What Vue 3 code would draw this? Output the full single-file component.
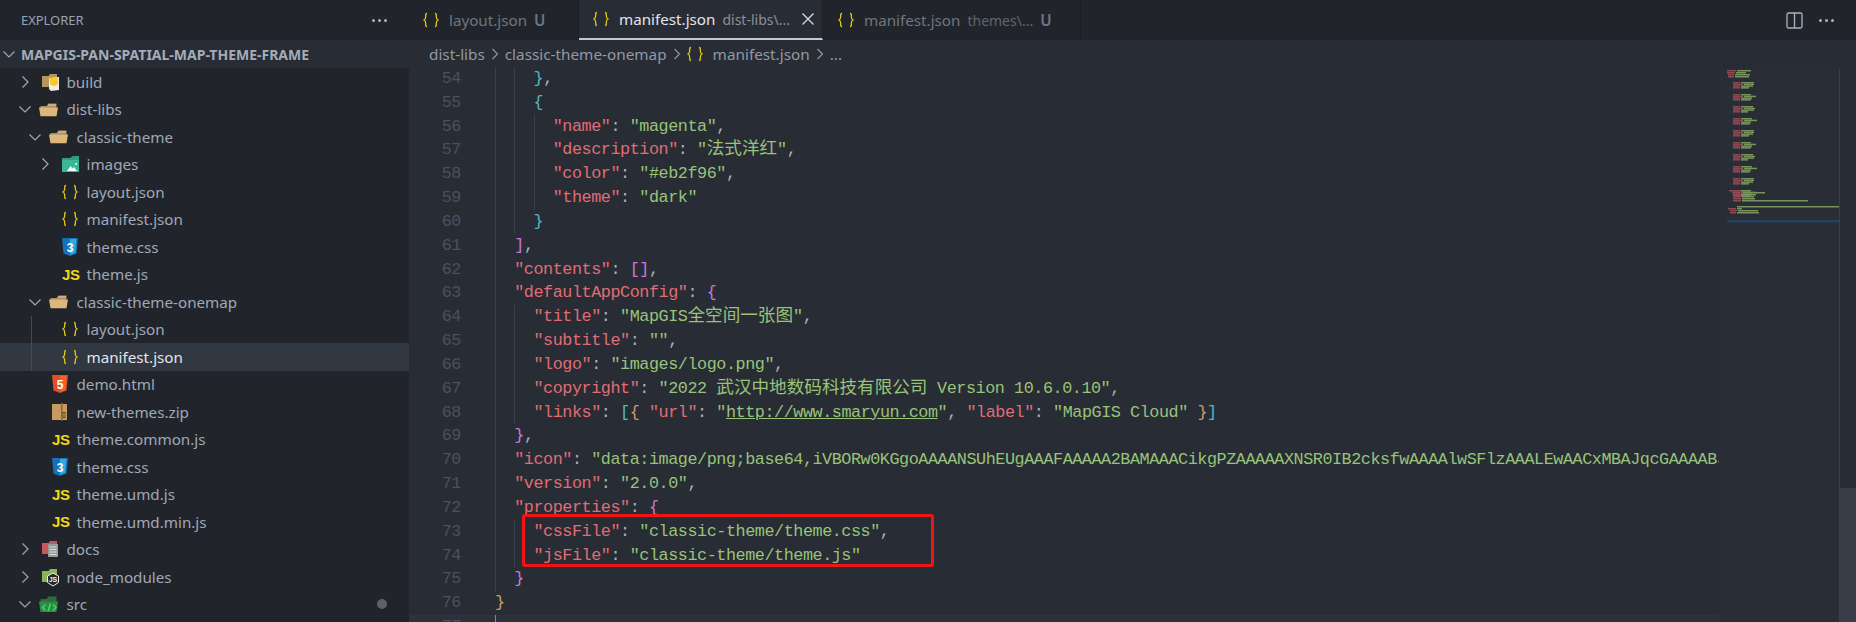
<script setup>
const tree = [
  { name: 'build', d: 0, chev: 'r', icon: 'build' },
  { name: 'dist-libs', d: 0, chev: 'd', icon: 'open' },
  { name: 'classic-theme', d: 1, chev: 'd', icon: 'open' },
  { name: 'images', d: 2, chev: 'r', icon: 'images' },
  { name: 'layout.json', d: 2, icon: 'json' },
  { name: 'manifest.json', d: 2, icon: 'json' },
  { name: 'theme.css', d: 2, icon: 'css' },
  { name: 'theme.js', d: 2, icon: 'js' },
  { name: 'classic-theme-onemap', d: 1, chev: 'd', icon: 'open' },
  { name: 'layout.json', d: 2, icon: 'json', guide: true },
  { name: 'manifest.json', d: 2, icon: 'json', guide: true, sel: true },
  { name: 'demo.html', d: 1, icon: 'html' },
  { name: 'new-themes.zip', d: 1, icon: 'zip' },
  { name: 'theme.common.js', d: 1, icon: 'js' },
  { name: 'theme.css', d: 1, icon: 'css' },
  { name: 'theme.umd.js', d: 1, icon: 'js' },
  { name: 'theme.umd.min.js', d: 1, icon: 'js' },
  { name: 'docs', d: 0, chev: 'r', icon: 'docs' },
  { name: 'node_modules', d: 0, chev: 'r', icon: 'node' },
  { name: 'src', d: 0, chev: 'd', icon: 'src', dot: true }
]

const k = t => ['k', t]
const s = t => ['s', t]
const p = t => ['p', t]
const b = t => ['b', t]
const o = t => ['o', t]
const m = t => ['m', t]
const u = t => ['u', t]

const longIcon = '"data:image/png;base64,iVBORw0KGgoAAAANSUhEUgAAAFAAAAA2BAMAAACikgPZAAAAAXNSR0IB2cksfwAAAAlwSFlzAAALEwAACxMBAJqcGAAAABJRU5ErkJggg'

const code = [
  [54, 2, [b('}'), p(',')]],
  [55, 2, [b('{')]],
  [56, 3, [k('"name"'), p(': '), s('"magenta"'), p(',')]],
  [57, 3, [k('"description"'), p(': '), s('"'), ['cjk', '法式洋红'], s('"'), p(',')]],
  [58, 3, [k('"color"'), p(': '), s('"#eb2f96"'), p(',')]],
  [59, 3, [k('"theme"'), p(': '), s('"dark"')]],
  [60, 2, [b('}')]],
  [61, 1, [m(']'), p(',')]],
  [62, 1, [k('"contents"'), p(': '), m('[]'), p(',')]],
  [63, 1, [k('"defaultAppConfig"'), p(': '), m('{')]],
  [64, 2, [k('"title"'), p(': '), s('"MapGIS'), ['cjk', '全空间一张图'], s('"'), p(',')]],
  [65, 2, [k('"subtitle"'), p(': '), s('""'), p(',')]],
  [66, 2, [k('"logo"'), p(': '), s('"images/logo.png"'), p(',')]],
  [67, 2, [k('"copyright"'), p(': '), s('"2022 '), ['cjk', '武汉中地数码科技有限公司'], s(' Version 10.6.0.10"'), p(',')]],
  [68, 2, [k('"links"'), p(': '), b('['), o('{ '), k('"url"'), p(': '), s('"'), u('http://www.smaryun.com'), s('"'), p(', '), k('"label"'), p(': '), s('"MapGIS Cloud"'), p(' '), o('}'), b(']')]],
  [69, 1, [m('}'), p(',')]],
  [70, 1, [k('"icon"'), p(': '), s(longIcon)]],
  [71, 1, [k('"version"'), p(': '), s('"2.0.0"'), p(',')]],
  [72, 1, [k('"properties"'), p(': '), m('{')]],
  [73, 2, [k('"cssFile"'), p(': '), s('"classic-theme/theme.css"'), p(',')]],
  [74, 2, [k('"jsFile"'), p(': '), s('"classic-theme/theme.js"')]],
  [75, 1, [m('}')]],
  [76, 0, [o('}')]],
  [77, 0, []]
]

// Minimap: each source line is a 2px strip of dull key/value colour.
const mini = []
const strip = (y, x, kw, vw) => {
  mini.push({ x, y, w: kw, c: '#8c4a53' })
  mini.push({ x: x + kw + 1, y, w: vw, c: '#76945c' })
}
const widths = [17, 13, 15, 14]
;[[70, 8, 9, 14], [72, 8, 8, 10], [74, 9, 6, 15], [76, 9, 6, 14]].forEach(r => strip(r[0], r[1], r[2], r[3]))
for (let g = 0; g < 10; g++) {
  const y = 82 + g * 12
  for (let i = 0; i < 4; i++) {
    strip(y + i * 1.7, 14, i === 1 ? 10 : 7, (widths[(g + i) % 4] * (i === 3 ? 0.6 : 0.8)) | 0)
  }
}
;[[190, 10, 12, 8], [192, 13, 10, 22], [194, 14, 8, 14], [196, 14, 8, 12], [198, 14, 8, 13], [200, 14, 8, 66]].forEach(r => strip(r[0], r[1], r[2], r[3]))
;[[208, 9, 8, 5], [210, 11, 7, 20], [212, 11, 6, 22]].forEach(r => strip(r[0], r[1], r[2], r[3]))
const miniRects = mini.map(r => ({ ...r, y: r.y - 68 }))
</script>

<template>
  <div class="window">
    <aside class="sidebar">
      <div class="side-head">
        <span class="side-title">EXPLORER</span>
        <span class="dots"><i></i><i></i><i></i></span>
      </div>
      <div class="section">
        <svg class="chev-sec" width="14" height="14" viewBox="0 0 14 14"><path d="M1.5 4.5 7 10l5.500-5.500" /></svg>
        <span>MAPGIS-PAN-SPATIAL-MAP-THEME-FRAME</span>
      </div>
      <div class="tree">
        <div
          v-for="(r, i) in tree"
          :key="i"
          class="row"
          :class="{ sel: r.sel }"
          :style="{ paddingLeft: 20 + r.d * 10 + 'px' }"
        >
          <span v-if="r.guide" class="tree-guide"></span>
          <span class="chev">
            <svg v-if="r.chev === 'r'" width="14" height="14" viewBox="0 0 14 14"><path d="M4.500 1.500 10 7l-5.500 5.500" /></svg>
            <svg v-else-if="r.chev === 'd'" width="14" height="14" viewBox="0 0 14 14"><path d="M1.500 4.500 7 10l5.500-5.500" /></svg>
          </span>
          <span class="ico">
            <svg v-if="r.icon === 'json'" class="file-ic" width="16" height="16" viewBox="0 0 16 16" fill="none" stroke="#e5c90f" stroke-width="1.300">
              <path d="M4 1.500C2.500 1.500 2.700 3 2.700 4.500S2.700 7.300 1 8c1.700.7 1.700 2 1.700 3.500s-.2 3 1.300 3" />
              <path d="M12 1.500c1.500 0 1.300 1.500 1.300 3s0 2.800 1.700 3.500c-1.700.7-1.700 2-1.700 3.500s.2 3-1.300 3" />
            </svg>
            <span v-else-if="r.icon === 'js'" class="js-ic">JS</span>
            <svg v-else-if="r.icon === 'css'" class="file-ic" width="16" height="18" viewBox="0 0 16 18">
              <path fill="#1572b6" d="M0 0h16l-1.500 15.500L8 18l-6.500-2.500z" />
              <path fill="#33a9dc" d="M8 1v15.800l5.200-1.800L14.400 1z" />
              <text x="8" y="13.500" text-anchor="middle" class="glyph">3</text>
            </svg>
            <svg v-else-if="r.icon === 'html'" class="file-ic" width="16" height="18" viewBox="0 0 16 18">
              <path fill="#e44d26" d="M0 0h16l-1.500 15.500L8 18l-6.500-2.500z" />
              <path fill="#f16529" d="M8 1v15.800l5.200-1.800L14.400 1z" />
              <text x="8" y="13.500" text-anchor="middle" class="glyph">5</text>
            </svg>
            <svg v-else-if="r.icon === 'zip'" class="file-ic" width="16" height="18" viewBox="0 0 16 18">
              <path fill="#c79a5f" d="M0 1h15v16H0z" />
              <path fill="#8a6a3c" d="M9 0h1.500v18H9z" />
              <path fill="#5a4426" d="M10.500 9h3v6h-3z" />
              <path fill="#d8b47f" d="M11.500 10h1v4h-1z" />
            </svg>
            <svg v-else-if="r.icon === 'open'" class="fold-ic" width="20" height="15" viewBox="0 0 20 15">
              <path fill="#a98e62" d="M1.500 4h6l2-2.500h8v5h-16z" />
              <path fill="#e8cfa0" d="M9.500 2.500h7.500v1H9z" />
              <path fill="#dcb67a" d="M0 5.500h19l-1.500 8.800H1.500z" />
            </svg>
            <svg v-else-if="r.icon === 'build'" class="fold-ic2" width="19" height="18" viewBox="0 0 19 18">
              <path fill="#b4975a" d="M1 3h6.500l1.500-2h7v13H1z" />
              <path fill="#f0ece0" d="M8 5l10-1v13l-8 1-2-2z" />
              <path fill="#f9c72e" d="M8.500 5H17v3.500a4 4 0 0 1-8 .5z" />
            </svg>
            <svg v-else-if="r.icon === 'images'" class="file-ic" width="18" height="18" viewBox="0 0 18 18">
              <path fill="#2f9e80" d="M0 3h8l3-2h6v6H0z" />
              <path fill="#3bb893" d="M0 5h17v12H0z" />
              <path fill="#eafff6" d="M5 16l3.500-5 2 2.500 1.500-1.500 3 4z" />
              <circle cx="14" cy="9" r="1" fill="#eafff6" />
            </svg>
            <svg v-else-if="r.icon === 'docs'" class="fold-ic2" width="19" height="18" viewBox="0 0 19 18">
              <path fill="#c6575c" d="M1 3h6.500l1.500-2h7v13H1z" />
              <path fill="#9a9a9a" d="M7 4h10v13H7z" />
              <path fill="#dcdcdc" d="M8.500 6.500h7v1h-7zm0 2.500h7v1h-7zm0 2.500h7v1h-7zm0 2.500h7v1h-7z" />
            </svg>
            <svg v-else-if="r.icon === 'node'" class="fold-ic2" width="19" height="20" viewBox="0 0 19 20">
              <path fill="#8ab45a" d="M1 4h6.500L9 2h7v13H1z" />
              <path fill="#23272e" stroke="#eef2e6" stroke-width="1" d="M12 6l5.500 3v6.500L12 19l-5.500-3.500V9z" />
              <text x="12" y="15" text-anchor="middle" class="glyph-s">JS</text>
            </svg>
            <svg v-else-if="r.icon === 'src'" class="fold-ic" width="20" height="17" viewBox="0 0 20 17">
              <path fill="#2c6e3a" d="M1.500 3h6l2-2.500h8v8h-16z" />
              <path fill="#2f8a45" d="M0 5.500h19l-1.500 10.500H1.500z" />
              <path fill="none" stroke="#3ee25f" stroke-width="1.400" d="M6.500 8.500 3.500 11.500l3 3M14 8.500l3 3-3 3M11.500 7.500 9 15.500" />
            </svg>
          </span>
          <span class="fname">{{ r.name }}</span>
          <span v-if="r.dot" class="dot"></span>
        </div>
      </div>
    </aside>

    <main class="main">
      <div class="tabs">
        <div class="tab tab1">
          <svg class="brace" width="16" height="16" viewBox="0 0 16 16" fill="none" stroke="#e5c90f" stroke-width="1.300">
            <path d="M4 1.500C2.500 1.500 2.700 3 2.700 4.500S2.700 7.300 1 8c1.700.7 1.700 2 1.700 3.500s-.2 3 1.300 3" />
            <path d="M12 1.500c1.500 0 1.300 1.500 1.300 3s0 2.800 1.700 3.500c-1.700.7-1.700 2-1.700 3.500s.2 3-1.300 3" />
          </svg>
          <span class="tname">layout.json</span>
          <span class="tu">U</span>
        </div>
        <div class="tab tab2">
          <svg class="brace" width="16" height="16" viewBox="0 0 16 16" fill="none" stroke="#e5c90f" stroke-width="1.300">
            <path d="M4 1.500C2.500 1.500 2.700 3 2.700 4.500S2.700 7.300 1 8c1.700.7 1.700 2 1.700 3.500s-.2 3 1.300 3" />
            <path d="M12 1.500c1.500 0 1.300 1.500 1.300 3s0 2.800 1.700 3.500c-1.700.7-1.700 2-1.700 3.500s.2 3-1.300 3" />
          </svg>
          <span class="tname">manifest.json</span>
          <span class="tdesc">dist-libs\...</span>
          <svg class="close" width="14" height="14" viewBox="0 0 14 14"><path d="M1.500 1.500l11 11M12.500 1.500l-11 11" /></svg>
        </div>
        <div class="tab tab3">
          <svg class="brace" width="16" height="16" viewBox="0 0 16 16" fill="none" stroke="#e5c90f" stroke-width="1.300">
            <path d="M4 1.500C2.500 1.500 2.700 3 2.700 4.500S2.700 7.300 1 8c1.700.7 1.700 2 1.700 3.500s-.2 3 1.300 3" />
            <path d="M12 1.500c1.500 0 1.300 1.500 1.300 3s0 2.800 1.700 3.500c-1.700.7-1.700 2-1.700 3.500s.2 3-1.300 3" />
          </svg>
          <span class="tname">manifest.json</span>
          <span class="tdesc">themes\...</span>
          <span class="tu">U</span>
        </div>
        <div class="tab-actions">
          <svg width="17" height="17" viewBox="0 0 17 17" fill="none" stroke="#abb2bf" stroke-width="1.300"><rect x="1" y="1" width="15" height="15" rx="1.500" /><path d="M8.500 1v15" /></svg>
          <span class="dots"><i></i><i></i><i></i></span>
        </div>
      </div>

      <div class="crumbs">
        <span>dist-libs</span>
        <svg class="cr" width="8" height="12" viewBox="0 0 8 12"><path d="M1.500 1 6.500 6l-5 5" /></svg>
        <span>classic-theme-onemap</span>
        <svg class="cr" width="8" height="12" viewBox="0 0 8 12"><path d="M1.500 1 6.500 6l-5 5" /></svg>
        <svg class="cr-brace" width="16" height="16" viewBox="0 0 16 16" fill="none" stroke="#e5c90f" stroke-width="1.300">
          <path d="M4 1.500C2.500 1.500 2.700 3 2.700 4.500S2.700 7.300 1 8c1.700.7 1.700 2 1.700 3.500s-.2 3 1.300 3" />
          <path d="M12 1.500c1.500 0 1.300 1.500 1.300 3s0 2.800 1.700 3.500c-1.700.7-1.700 2-1.700 3.500s.2 3-1.300 3" />
        </svg>
        <span>manifest.json</span>
        <svg class="cr" width="8" height="12" viewBox="0 0 8 12"><path d="M1.500 1 6.500 6l-5 5" /></svg>
        <span>...</span>
      </div>

      <div class="editor">
        <div class="code">
          <div v-for="l in code" :key="l[0]" class="line" :class="{ current: l[0] === 77 }">
            <span class="ln">{{ l[0] }}</span>
            <span class="content">
              <span v-for="g in l[1]" :key="g" class="indent"></span>
              <span v-if="l[0] === 77" class="cursor"></span>
              <span v-for="(t, j) in l[2]" :key="j" :class="t[0]">{{ t[1] }}</span>
            </span>
          </div>
          <div class="redbox"></div>
        </div>
        <div class="minimap">
          <svg width="120" height="554" viewBox="0 0 120 554">
            <rect v-for="(r, i) in miniRects" :key="i" :x="r.x" :y="r.y" :width="r.w" height="1.500" :fill="r.c" />
            <rect x="18" y="138" width="102" height="1.500" fill="#76945c" />
            <rect x="8" y="152" width="112" height="2.500" fill="#27405f" />
          </svg>
        </div>
        <div class="scrollbar"><div class="slider"></div></div>
      </div>
    </main>
  </div>
</template>

<style scoped>
.window {
  display: flex;
  width: 1856px;
  height: 622px;
  overflow: hidden;
  background: #282c34;
  font-family: "Noto Sans", "Open Sans", sans-serif;
}

.sidebar {
  width: 409px;
  flex: none;
  background: #21252b;
  color: #a0a8b7;
  display: flex;
  flex-direction: column;
}
.side-head {
  height: 40px;
  display: flex;
  align-items: center;
  justify-content: space-between;
  padding: 0 22px 0 21px;
}
.side-title {
  font-size: 13px;
  color: #9aa3b2;
  letter-spacing: -0.05px;
}
.dots {
  display: inline-flex;
  gap: 3px;
}
.dots i {
  width: 3px;
  height: 3px;
  border-radius: 50%;
  background: #abb2bf;
}
.section {
  height: 28px;
  background: #282c34;
  display: flex;
  align-items: center;
  padding-left: 2px;
  gap: 5px;
  font-size: 14px;
  font-weight: 700;
  color: #a4acba;
}
.chev-sec path,
.chev path {
  fill: none;
  stroke: #a0a8b7;
  stroke-width: 1.200;
}
.tree {
  display: flex;
  flex-direction: column;
}
.row {
  position: relative;
  height: 27.5px;
  display: flex;
  align-items: center;
  font-size: 15.200px;
}
.row.sel {
  background: #323842;
  color: #e2e5ea;
}
.tree-guide {
  position: absolute;
  left: 31px;
  top: 0;
  bottom: 0;
  width: 1px;
  background: #454b56;
}
.chev {
  width: 20px;
  height: 14px;
  flex: none;
}
.chev svg {
  margin-left: -2px;
  display: block;
}
.ico {
  width: 26.5px;
  flex: none;
  display: flex;
  align-items: center;
}
.file-ic {
  margin-left: 2px;
}
.fold-ic {
  margin-left: -1px;
}
.fold-ic2 {
  margin-left: 1px;
}
.js-ic {
  margin-left: 2px;
  font-family: "Liberation Sans", sans-serif;
  font-weight: 700;
  font-size: 15px;
  letter-spacing: -0.3px;
  color: #f2d713;
}
.glyph {
  font-family: "Liberation Sans", sans-serif;
  font-weight: 700;
  font-size: 12px;
  fill: #fff;
}
.glyph-s {
  font-family: "Liberation Sans", sans-serif;
  font-weight: 700;
  font-size: 7px;
  fill: #eef2e6;
}
.fname {
  white-space: nowrap;
}
.dot {
  margin-left: auto;
  margin-right: 22px;
  width: 10px;
  height: 10px;
  border-radius: 50%;
  background: #5b606b;
}

.main {
  flex: 1;
  min-width: 0;
  display: flex;
  flex-direction: column;
}
.tabs {
  height: 40px;
  background: #21252b;
  display: flex;
  align-items: stretch;
  flex: none;
}
.tab {
  display: flex;
  align-items: center;
  box-sizing: border-box;
  font-size: 15.200px;
  color: #6f7581;
  border-right: 1px solid #1b1e23;
  white-space: nowrap;
}
.brace {
  flex: none;
  margin-right: 10px;
}
.tab1 {
  width: 170px;
  padding-left: 14px;
}
.tab2 {
  width: 244px;
  padding-left: 14px;
  background: #282c34;
  color: #e2e5ea;
  border-bottom: 2px solid #c5c9d0;
}
.tab3 {
  width: 258px;
  padding-left: 15px;
}
.tu {
  margin-left: 7px;
  font-weight: 600;
}
.tdesc {
  margin-left: 7px;
  font-size: 14px;
  color: #8b909a;
}
.tab3 .tdesc {
  color: #5f6570;
}
.close {
  margin-left: 11px;
}
.close path {
  stroke: #d7dae0;
  stroke-width: 1.300;
  fill: none;
}
.tab-actions {
  margin-left: auto;
  display: flex;
  align-items: center;
  gap: 16px;
  padding-right: 22px;
}

.crumbs {
  height: 28px;
  flex: none;
  display: flex;
  align-items: center;
  padding-left: 20px;
  font-size: 15.300px;
  color: #9199a6;
  background: #282c34;
  white-space: nowrap;
}
.cr {
  margin: 0 6px;
}
.cr path {
  fill: none;
  stroke: #9199a6;
  stroke-width: 1.100;
}
.cr-brace {
  margin-right: 10px;
}

.editor {
  flex: 1;
  min-height: 0;
  display: flex;
  background: #282c34;
}
.code {
  position: relative;
  width: 1310px;
  flex: none;
  overflow: hidden;
  display: flex;
  flex-direction: column;
  margin-top: -1px;
  font-family: "Liberation Mono", "Noto Sans CJK SC", monospace;
  font-size: 16.800px;
  letter-spacing: -0.45px;
}
.line {
  height: 23.84px;
  flex: none;
  display: flex;
  line-height: 23.84px;
  white-space: pre;
}
.line.current {
  background: #2c313c;
}
.ln {
  width: 52px;
  padding-right: 34px;
  flex: none;
  text-align: right;
  color: #495162;
}
.content {
  display: flex;
  min-width: 0;
  overflow: hidden;
  flex: 1;
}
.indent {
  width: 19.26px;
  flex: none;
  box-sizing: border-box;
  border-left: 1px solid #3b4048;
}
.k {
  color: #e06c75;
}
.s {
  color: #98c379;
}
.cjk {
  color: #98c379;
  font-size: 17.600px;
  letter-spacing: 0;
}
.u {
  color: #98c379;
  text-decoration: underline;
}
.p {
  color: #abb2bf;
}
.b {
  color: #56b6c2;
}
.o {
  color: #d19a66;
}
.m {
  color: #c678dd;
}
.cursor {
  width: 2px;
  margin-left: -1px;
  background: #528bff;
}
.redbox {
  position: absolute;
  left: 113px;
  top: 447px;
  width: 412px;
  height: 53px;
  box-sizing: border-box;
  border: 3px solid #f01414;
  border-radius: 3px;
}
.minimap {
  width: 120px;
  flex: none;
  background: #292d35;
  overflow: hidden;
}
.minimap svg {
  display: block;
}
.scrollbar {
  flex: 1;
  border-left: 1px solid #3a3f49;
  display: flex;
  flex-direction: column;
  justify-content: flex-end;
}
.slider {
  height: 134px;
  background: #383d48;
}
</style>

<style>
html, body {
  margin: 0;
  background: #282c34;
}
</style>
